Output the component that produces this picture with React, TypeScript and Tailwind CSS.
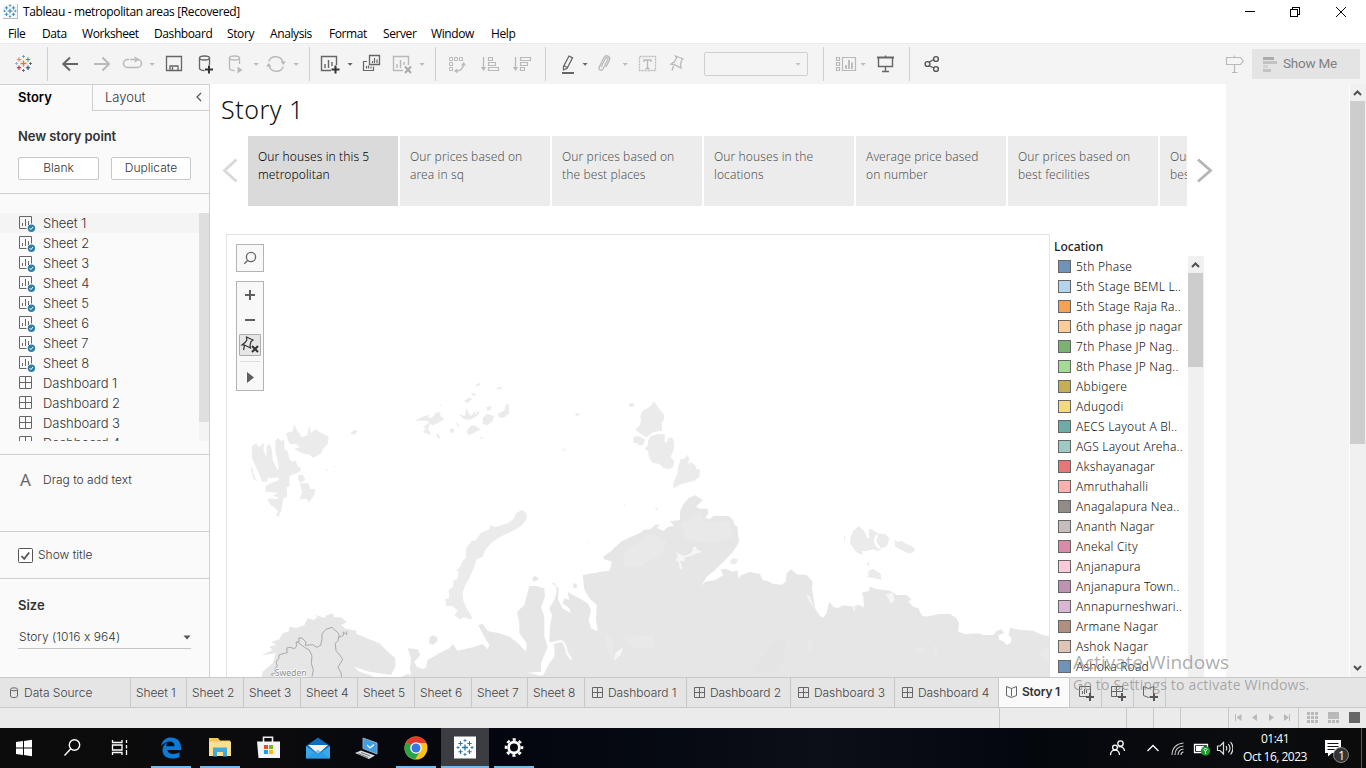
import React from "react";

const G = "#666";
const L = "#b9b9b9";

function Ico({ className = "", size = 24, children }: { className?: string; size?: number; children: React.ReactNode }) {
  return (
    <svg width={size} height={size} viewBox={`0 0 ${size} ${size}`} fill="none" className={`shrink-0 ${className}`}>
      {children}
    </svg>
  );
}

function Caret({ className, color = L }: { className: string; color?: string }) {
  return (
    <svg width="8" height="8" viewBox="0 0 8 8" className={`shrink-0 ${className}`}>
      <path d="M1.5 3h5.2L4.1 5.8z" fill={color} />
    </svg>
  );
}

const Sep = ({ className }: { className: string }) => <div className={`h-[34px] w-px shrink-0 bg-[#cfcfcf] ${className}`} />;

function Plus({ x, y, r, c, w = 1.2 }: { x: number; y: number; r: number; c: string; w?: number }) {
  return <path d={`M${x - r} ${y}h${2 * r}M${x} ${y - r}v${2 * r}`} stroke={c} strokeWidth={w} />;
}

function TableauMark({ mono }: { mono?: string }) {
  const c = (v: string) => mono ?? v;
  return (
    <>
      <Plus x={12.500} y={11.5} r={3} c={c("#e8762d")} w={1.3} />
      <Plus x={8} y={7.5} r={2.2} c={c("#eb912c")} w={1.1} />
      <Plus x={17} y={7.5} r={2.2} c={c("#59879b")} w={1.1} />
      <Plus x={8} y={15.8} r={2.2} c={c("#c72035")} w={1.1} />
      <Plus x={17} y={15.8} r={2.2} c={c("#1f447e")} w={1.1} />
      <Plus x={12.500} y={4.5} r={1.500} c={c("#7199a6")} w={0.9} />
      <Plus x={12.500} y={18.5} r={1.500} c={c("#5b6591")} w={0.9} />
      <Plus x={5.500} y={11.5} r={1.500} c={c("#7fb0c4")} w={0.9} />
      <Plus x={19.500} y={11.5} r={1.500} c={c("#5b6591")} w={0.9} />
    </>
  );
}

const menu = [
  ["File", "w-[34px]"],
  ["Data", "w-[40px]"],
  ["Worksheet", "w-[72px]"],
  ["Dashboard", "w-[73px]"],
  ["Story", "w-[43px]"],
  ["Analysis", "w-[59px]"],
  ["Format", "w-[54px]"],
  ["Server", "w-[48px]"],
  ["Window", "w-[60px]"],
  ["Help", "w-[40px]"],
];

function TitleBar() {
  return (
    <header className="flex h-[43px] shrink-0 flex-col bg-white font-['Open_Sans',sans-serif] text-[12px] text-black">
      <div className="flex h-[23px] items-center pl-[3px]">
        <div className="h-[15px] w-[15px] border-b border-r border-[#bbb] bg-[#f7f7f7]">
          <svg width="14" height="14" viewBox="3.500 2.5 18 18"><TableauMark mono="#2c7fb5" /></svg>
        </div>
        <span className="ml-[5px] tracking-[-0.36px]">Tableau - metropolitan areas [Recovered]</span>
        <svg width="126" height="20" viewBox="0 0 126 20" className="ml-auto" fill="none" stroke="#000" shapeRendering="crispEdges">
          <path d="M5 9.5h10" />
          <path d="M50.5 7.5h7v7h-7zM52.5 7V5.500h7v7H58" />
          <path d="M96 5l10 10M106 5l-10 10" shapeRendering="auto" />
        </svg>
      </div>
      <div className="flex h-5 items-center pl-2 pt-px">
        {menu.map(([m, w]) => (
          <span key={m} className={`${w} shrink-0 tracking-[-0.4px]`}>{m}</span>
        ))}
      </div>
    </header>
  );
}

function Toolbar() {
  return (
    <div className="flex h-[41px] shrink-0 items-center border-t border-[#ececec] bg-[#f4f4f4] pl-[11px]">
      <Ico><TableauMark /></Ico>
      <Sep className="ml-3" />
      <Ico className="ml-[10px]"><path d="M20 12H5M12 5.500L5.300 12l6.700 6.500" stroke={G} strokeWidth="2" /></Ico>
      <Ico className="ml-2"><path d="M4 12h15M12.500 5.500L19 12l-6.500 6.500" stroke={L} strokeWidth="2" /></Ico>
      <Ico className="ml-1.5"><path d="M9 7.500H7.500a4 4 0 0 0 0 8h10a4 4 0 0 0 0-8H16" stroke={L} strokeWidth="1.500" /><path d="M10 7.500h8M14.500 5l3.500 2.500L14.500 10" stroke={L} strokeWidth="1.300" /></Ico>
      <Caret className="ml-1" />
      <Ico className="ml-1.5"><path d="M4.500 4.500h15v14h-15z" stroke={G} strokeWidth="1.300" /><path d="M8 18.500v-4.500h8v4.500M10.500 15v3" stroke={G} strokeWidth="1.300" /></Ico>
      <Ico className="ml-2">
        <path d="M5.500 6v10c0 1.500 2 2.500 5 2.500M15.500 6v7" stroke={G} strokeWidth="1.300" />
        <ellipse cx="10.500" cy="6" rx="5" ry="2" stroke={G} strokeWidth="1.300" />
        <path d="M11 17.500h8M15 13.500v8" stroke="#333" strokeWidth="2" />
      </Ico>
      <Ico className="ml-1.5">
        <path d="M5.500 6v10c0 1.500 2 2.500 5 2.500M15.500 6v6" stroke={L} strokeWidth="1.300" />
        <ellipse cx="10.500" cy="6" rx="5" ry="2" stroke={L} strokeWidth="1.300" />
        <path d="M13.500 14.500l5 3.500-5 3.500z" fill={L} />
      </Ico>
      <Caret className="ml-1" />
      <Ico className="ml-1">
        <path d="M4.700 9.500a7.500 7.500 0 0 1 14.400 1.500M19.300 14.500A7.500 7.500 0 0 1 4.900 13" stroke={L} strokeWidth="1.400" />
        <path d="M16.500 9.500h5.500l-2.700 3.500zM2 14.500h5.500L4.800 11z" fill={L} />
      </Ico>
      <Caret className="ml-1" />
      <Sep className="ml-[9px]" />
      <Ico className="ml-[9px]">
        <path d="M12 18.500H2.500v-14h15V13" stroke={G} strokeWidth="1.400" />
        <path d="M6 12v4M9.500 8v8M13 10v4" stroke={G} strokeWidth="1.400" />
        <path d="M12.500 17.500h8M16.500 13.500v8" stroke="#333" strokeWidth="2" />
      </Ico>
      <Caret className="ml-[3px]" color={G} />
      <Ico className="ml-[5px]">
        <path d="M10.500 3.500h10v9h-10z" stroke={G} strokeWidth="1.300" />
        <path d="M13.500 9v2M15.500 6v5M18 7.500V11" stroke={G} strokeWidth="1.200" />
        <path d="M8 9.500H4.500v9h10v-4M7.500 14v2.500M9.500 13.500v3M12 14.500v2" stroke={G} strokeWidth="1.200" />
      </Ico>
      <Ico className="ml-2">
        <path d="M12 18.500H2.500v-14h15V13" stroke={L} strokeWidth="1.400" />
        <path d="M6 12v4M9.500 8v8M13 10v3" stroke={L} strokeWidth="1.400" />
        <path d="M14 14.500l6 6.500M20 14.500l-6 6.500" stroke="#aaa" strokeWidth="2" />
      </Ico>
      <Caret className="ml-[3px]" />
      <Sep className="ml-[9px]" />
      <Ico className="ml-[9px]">
        <path d="M4.500 5.500h3v3h-3zM9.500 5.500h3v3h-3zM14.500 5.500h3v3h-3zM4.500 10.500h3v3h-3zM4.500 15.500h3v3h-3z" stroke={L} />
        <path d="M18.500 11.500c0 5-3 7.500-8 7.500" stroke={L} strokeWidth="1.300" />
        <path d="M16 13.500l2.700-3.500 2.300 3.500zM12.500 16.500v5L9 19z" fill={L} />
      </Ico>
      <Ico className="ml-[9px]">
        <path d="M5.500 5v12" stroke={L} strokeWidth="1.300" /><path d="M2.800 15h5.400l-2.700 4z" fill={L} />
        <path d="M10.500 5.500h4v3h-4zM10.500 10.500h7v3h-7zM10.500 15.500h10v3h-10z" stroke={L} strokeWidth="1.200" />
      </Ico>
      <Ico className="ml-2">
        <path d="M5.500 5v12" stroke={L} strokeWidth="1.300" /><path d="M2.800 15h5.400l-2.700 4z" fill={L} />
        <path d="M10.500 5.500h10v3h-10zM10.500 10.500h7v3h-7zM10.500 15.500h4v3h-4z" stroke={L} strokeWidth="1.200" />
      </Ico>
      <Sep className="ml-[11px]" />
      <Ico className="ml-[10px]">
        <path d="M7.500 14.500L13 4l3.500 1.700L11 16.500l-3.500 1.300zM7.500 13.500l3.800 2M13 4l3.500 2" stroke={G} strokeWidth="1.300" />
        <path d="M6 21h12" stroke={G} strokeWidth="2" />
      </Ico>
      <Caret className="ml-px" color={G} />
      <Ico className="ml-1">
        <path d="M8 15l4.500-8.500c1-1.500 3-.5 2.300 1.200L10 17c-1.500 2.500-5 .5-3.800-2L11 5.500C13 2 18 4.500 16.300 8.500L13 15" stroke={L} strokeWidth="1.300" />
      </Ico>
      <Caret className="ml-1" />
      <Ico className="ml-1.5">
        <path d="M4.500 4.500h16v14h-16z" stroke={L} strokeWidth="1.300" strokeDasharray="2 1" />
        <path d="M9 10V8h7v2M12.500 8v8.500M10.500 16.500h4" stroke={L} strokeWidth="1.400" />
      </Ico>
      <Ico className="ml-1.5">
        <path d="M10.500 4l7.500 3-1.500 1.500-1 4 .5 3.500-7-3.500-3-.5 3.500-2.500 2-3.500zM8.500 14l-1.500 4.500" stroke={L} strokeWidth="1.300" />
      </Ico>
      <div className="ml-[15px] flex h-6 w-[104px] items-center justify-end rounded-[2px] border border-[#cfcfcf] pr-[5px]">
        <Caret className="" color="#c4c4c4" />
      </div>
      <Sep className="ml-[15px]" />
      <Ico className="ml-[10px]">
        <path d="M2.500 5.500h3v3h-3zM2.500 10.500h3v3h-3zM2.500 15.500h3v3h-3zM8.500 5.500h13v13h-13z" stroke={L} strokeWidth="1.200" />
        <path d="M12 13v4M15 8v9M18 10.500V17" stroke={L} strokeWidth="1.800" />
      </Ico>
      <Caret className="ml-px" />
      <Ico className="ml-1.5">
        <path d="M4 5.500h17" stroke={G} strokeWidth="2" />
        <path d="M5.500 6v8.500h14V6M12.500 3.500V5M12.500 15v5M9 19.500h7" stroke={G} strokeWidth="1.400" />
      </Ico>
      <Sep className="ml-3" />
      <Ico className="ml-[10px]">
        <path d="M7.500 11l6.500-3.500M7.500 13l6.500 3" stroke="#555" strokeWidth="1.300" />
        <circle cx="7.500" cy="12" r="2.400" fill="#f4f4f4" stroke="#555" strokeWidth="1.400" />
        <circle cx="16" cy="7" r="2.400" fill="#f4f4f4" stroke="#555" strokeWidth="1.400" />
        <circle cx="16" cy="17" r="2.400" fill="#f4f4f4" stroke="#555" strokeWidth="1.400" />
      </Ico>
      <Ico className="ml-auto">
        <path d="M3.500 5.500h14l2.700 3.500-2.700 3.500h-14zM11.500 3.500v2M11.500 12.500V20M9 20.500h5.500" stroke={L} strokeWidth="1.200" />
      </Ico>
      <div className="ml-[5px] mr-[6px] flex h-[30px] w-[108px] items-center bg-[#e4e4e4] pl-[11px]">
        <svg width="15" height="15" viewBox="0 0 15 15">
          <path d="M0 0h11v3H0z" fill="#ababab" /><path d="M0 4h14v3H0z" fill="#c2c2c2" /><path d="M0 8h5v3H0z" fill="#d3d3d3" /><path d="M0 12h8v3H0z" fill="#c2c2c2" />
        </svg>
        <span className="mb-px ml-[5px] text-[13.5px] tracking-[-0.25px] text-[#808080] font-['Roboto',sans-serif]">Show Me</span>
      </div>
    </div>
  );
}

function SheetGlyph({ dash }: { dash?: boolean }) {
  return dash ? (
    <svg width="18" height="18" viewBox="0 0 18 18" fill="none" stroke={G} className="shrink-0">
      <rect x="1.500" y="2.500" width="12" height="12" rx="0.500" /><path d="M7.500 2.500v12M1.500 8.500h12" />
    </svg>
  ) : (
    <svg width="18" height="18" viewBox="0 0 18 18" fill="none" stroke={G} className="shrink-0">
      <path d="M8.500 14.500h-7v-12h12v7" /><path d="M4.500 9v3M7.500 5v7M10.500 7v4" />
      <circle cx="13.400" cy="14.200" r="3.700" fill="#2f7ea3" stroke="none" />
      <path d="M11.600 14.200l1.300 1.400 2.200-2.700" stroke="#fff" />
    </svg>
  );
}

function Sidebar() {
  const rows = [...Array(8)].map((_, i) => `Sheet ${i + 1}`).concat([1, 2, 3, 4].map((i) => `Dashboard ${i}`));
  return (
    <aside className="flex w-[210px] shrink-0 flex-col border-r border-t border-[#d0d0d0] bg-[#fafafa] font-['Inter',sans-serif] text-[12px] font-light text-[#333] [font-feature-settings:'calt'_0]">
      <div className="flex h-[26px] shrink-0">
        <div className="w-[92px] pl-[18px] pt-[2px] text-[13px] font-semibold leading-5 text-black">Story</div>
        <div className="flex flex-1 justify-between border-b border-l border-[#d0d0d0] pl-3 pr-[6px] pt-[2px] text-[13px] leading-5">
          <span>Layout</span>
          <svg width="8" height="12" viewBox="0 0 8 12" className="mt-[4px]" fill="none" stroke="#555" strokeWidth="1.200"><path d="M6 2L2 6l4 4" /></svg>
        </div>
      </div>
      <div className="h-[83px] shrink-0 border-b border-[#cfcfcf] pl-[18px] pt-[15px]">
        <div className="text-[13px] font-semibold leading-5 tracking-[-0.08px]">New story point</div>
        <div className="mt-[11px] flex gap-3">
          <div className="flex h-[23px] w-[81px] items-center justify-center rounded-[2px] border border-[#c8c8c8] bg-white pb-0.5">Blank</div>
          <div className="flex h-[23px] w-20 items-center justify-center rounded-[2px] border border-[#c8c8c8] bg-white pb-0.5">Duplicate</div>
        </div>
      </div>
      <div className="mt-[19px] flex h-[228px] shrink-0 overflow-hidden">
        <div className="flex-1">
          {rows.map((r, i) => (
            <div key={r} className={`flex h-5 items-center pl-[18px] text-[13px] ${i === 0 ? "bg-[#f4f4f4]" : ""}`}>
              <SheetGlyph dash={i > 7} />
              <span className="ml-[7px] pt-[2px] tracking-[-0.05px]">{r}</span>
            </div>
          ))}
        </div>
        <div className="w-[10px] bg-[#f4f4f4]"><div className="h-[209px] bg-[#dfdfdf]" /></div>
      </div>
      <div className="mt-[13px] flex h-[77px] shrink-0 border-t border-[#cfcfcf] pl-5 pt-4 leading-[18px]">
        <span className="w-[23px] font-['Noto_Sans',sans-serif] text-[17px] font-normal text-[#666]">A</span>
        <span>Drag to add text</span>
      </div>
      <div className="flex h-[47px] shrink-0 items-center border-t border-[#cfcfcf] pl-[18px]">
        <svg width="15" height="15" viewBox="0 0 15 15" fill="none"><rect x=".5" y=".5" width="14" height="14" rx="1" fill="#fff" stroke="#555" /><path d="M3.500 8l2.700 2.800 5-6.300" stroke="#555" strokeWidth="1.800" /></svg>
        <span className="ml-[5px]">Show title</span>
      </div>
      <div className="flex-1 border-t border-[#cfcfcf] px-[18px] pt-[16px]">
        <div className="text-[13px] font-semibold leading-5">Size</div>
        <div className="mt-[11px] flex h-[23px] items-center justify-between border-b border-[#c4c4c4] pl-px">
          <span className="tracking-[0.05px]">Story (1016 x 964)</span>
          <svg width="8" height="5" viewBox="0 0 8 5"><path d="M.5.500h7L4 4.500z" fill="#555" /></svg>
        </div>
      </div>
    </aside>
  );
}

function MapArt() {
  return (
    <svg width="822" height="442" viewBox="227 235 822 442" className="block">
      <g transform="translate(226 370) scale(.33333)">
        <g fill="#ebebeb">
          <path d="M78 228L92 220 98 232 115 218 112 240 122 262 122 228 132 222 138 240 140 270 155 300 158 290 148 240 148 212 156 203 164 212 174 210 176 238 186 245 190 268 200 275 208 270 216 290 224 292 224 304 205 312 190 318 190 348 182 352 184 380 172 385 168 410 165 425 160 432 160 442 150 435 156 425 150 416 134 405 124 388 135 385 150 388 160 382 140 378 155 368 118 365 118 348 135 340 160 330 155 322 135 325 128 320 122 335 108 335 102 318 90 292 78 265z" />
          <path d="M180 190L200 184 204 162 212 180 222 192 226 202 244 196 250 166 254 190 268 178 280 185 288 190 308 200 305 222 290 238 286 250 262 263 250 254 228 250 214 242 206 236 222 232 210 222 192 222 186 210z" />
          <path d="M216 316l14-2 8 16-14 8-8-8zM222 340l26 0 4 16 16 2-4 18-16 22-6-12-22 2 8-20-2-10zM372 192l12-12 12 4-12 10zM74 292l6 4 4 22 10 16-12-8z" />
          <path d="M566 152L590 140 608 134 606 142 618 144 630 128 642 126 644 140 656 146 640 156 622 166 612 162 606 178 614 188 612 194 590 186 600 176 592 170 610 158 604 152zM630 190l8 4 6 12-8-2zM670 178l12-4 4 12-10 4zM690 156l10 10-6 4zM698 132L716 138 722 114 728 130 736 138 750 120 746 134 758 122 760 132 744 144 728 150 712 146zM714 92l18-10 6 6-14 12zM736 68l12 4 2 6-12-2zM748 46l14-8 2 6-12 6zM722 182L736 166 750 168 764 178 752 184 742 190 726 196zM770 144L784 132 804 138 800 152 786 166 770 162zM782 112l14-4-2 12-10 4zM814 132L834 122 840 104 848 102 850 130 832 144 820 142zM762 200l10 2-6 6zM810 54l18-4-4 8-10 0zM1046 134l8-6 8 6-8 4zM1210 100l14 0-2 10-12 0zM1008 234l12 6-4 4z" />
          <path d="M658 688L670 684 668 660 682 650 682 632 694 628 698 605 690 602 704 588 712 570 720 565 720 535 738 512 748 512 765 488 790 478 794 465 808 472 845 460 862 448 870 430 888 419 902 430 902 448 888 466 862 482 820 502 795 520 778 540 770 560 752 568 742 598 730 625 718 645 710 668 712 692 722 715 738 740 735 750 715 742 700 748 685 735 695 722 678 708 660 708z" />
          <path d="M300 298l4 0 0 6-4 0zM324 288l6 1-4 3zM642 102l4 2-2 6zM1194 402l4 2-2 6zM1086 516l5 2-2 5z" />
        </g>
        <g fill="#e6e6e6">
          <path d="M505 930L545 912 555 915 552 895 555 865 545 835 575 838 583 855 565 875 572 890 590 897 600 893 605 870 640 850 670 835 680 822 695 842 740 832 770 822 785 838 790 825 775 800 757 765 770 762 785 783 820 790 850 800 875 818 900 845 902 820 880 790 880 760 873 725 895 705 910 648 930 648 955 655 957 680 945 712 955 740 955 800 965 830 945 880 945 905 905 908 945 918 960 912 945 930zM920 622l8-4 12 10-14 6-6-2z" />
          <path d="M945 930L970 880 985 860 985 825 970 815 972 770 978 735 970 715 985 690 992 664 990 648 998 655 996 690 1010 715 1035 730 1030 715 1010 700 1015 685 1030 690 1025 665 1035 672 1060 685 1085 700 1095 720 1088 750 1095 775 1115 784 1110 750 1112 705 1090 685 1075 658 1070 615 1150 602 1158 575 1130 562 1160 540 1185 515 1260 480V930z" />
          <path d="M106 930L110 905 140 880 146 862 150 850 106 856 140 840 130 830 150 824 136 816 160 808 170 790 188 784 190 770 210 774 235 766 245 744 262 750 275 742 268 734 295 744 302 736 320 730 325 742 345 742 362 756 345 766 360 776 390 782 392 792 430 808 460 820 480 840 508 865 508 890 495 915 460 910 430 905 385 890 400 905 440 918 450 930z" />
          <path d="M610 804l10-8 14 6 0 12-12 10-12-2zM978 640l8-2 4 12zM1042 640l10 2 0 12-10 0z" />
        </g>
        <g fill="none" stroke="#fbfbfb">
          <path d="M975 820l30-7c12 4 16 22 18 36l14 20" strokeWidth="7" />
          <path d="M1162 866l10-20 18-12-10 24-12 8" strokeWidth="3" strokeOpacity=".7" />
        </g>
        <g fill="none" stroke="#a8a8a8" strokeWidth="3">
          <path d="M140 918L136 912 148 910 146 898 154 888 150 876 158 866 160 854 176 850 184 848 182 834 192 832 206 836 212 828 210 818 220 814 218 804 228 804 240 816 238 826 260 824 272 832 284 826 288 808 288 792 300 778 318 772 326 780 338 790 340 802 352 796 352 786 362 794 362 784" />
          <path d="M212 814L236 832 250 840 258 858 256 880 262 900 258 920M338 800L336 812 328 820 330 842 342 856 350 868 336 892 346 910 346 922" />
        </g>
        <text x="146" y="919" fontSize="26" fill="#8c8c8c" stroke="#fff" strokeWidth="4" paintOrder="stroke" fontFamily="Noto Sans, sans-serif">Sweden</text>
      </g>
      <g transform="translate(600 380) scale(.33333)">
        <g fill="#ebebeb">
          <path d="M88 70l14 0-2 10-12 0zM162 64L176 84 192 104 192 118 186 126 186 152 160 156 140 172 132 168 106 150 118 138 124 118 120 110 128 92 150 80zM100 170l16-2 20 12-8 16-12 0-4-6-12-2zM144 182L152 168 176 162 194 162 194 186 200 188 204 174 216 172 222 186 222 206 212 230 222 244 220 260 206 268 190 264 178 252 158 248 148 234 144 214 134 206 144 196zM220 326L220 308 232 282 234 264 242 238 254 236 262 224 268 236 264 254 272 246 286 256 290 268 300 268 298 290 284 302 258 308 240 314z" />
          <path d="M752 470L760 452 776 438 792 452 798 464 800 474 808 474 806 448 816 448 832 460 856 462 868 476 862 496 850 504 836 502 844 508 832 514 820 508 804 512 786 514 786 524 768 516 756 498 750 492zM884 478l8 8 14-4 12 10 14 4 14 12-8 10-14 2-20-10-18-10zM732 466l4 8-4 12zM800 548l8 0-2 14zM794 590L806 588 804 574 820 566 842 582 844 600 822 594z" />
          <path d="M316 304l4 2M164 386l10-4-4 8zM390 542l10-8 14 4-6 14-14 0z" />
        </g>
        <path d="M832 466c-10 10-8 26 6 38" stroke="#fff" strokeWidth="8" fill="none" />
        <path
          fill="#e6e6e6"
          d="M-5 576L30 573 36 560 38 545 8 536 26 532 18 524 34 516 40 506 60 490 85 475 125 460 130 450 150 448 160 440 166 434 180 434 170 444 190 452 205 440 222 438 210 424 240 420 240 394 248 376 265 355 285 346 308 360 288 380 300 386 322 386 325 400 316 414 330 418 340 408 385 408 400 420 402 432 412 440 415 470 418 480 412 496 395 520 370 545 345 570 320 590 302 620 315 605 345 600 370 586 362 570 374 566 400 575 412 570 416 597 422 586 450 576 480 582 488 600 505 604 520 612 545 614 557 605 560 580 574 568 590 583 620 585 638 605 636 625 640 650 645 685 660 708 670 713 680 698 688 665 700 680 712 685 730 676 760 680 775 674 792 682 790 650 785 638 808 632 808 620 830 627 870 632 890 645 920 645 935 660 924 664 940 680 955 685 965 705 975 710 1020 702 1050 702 1070 715 1077 730 1075 755 1095 762 1135 760 1150 765 1180 765 1190 752 1205 748 1212 760 1195 765 1198 780 1210 784 1220 795 1233 788 1234 775 1226 765 1230 743 1260 750 1300 752 1325 764 1352 771V900H-5z"
        />
        <g fill="#f6f6f6">
          <path d="M226 512L236 522 252 528 268 522 276 516 280 502 288 500 292 510 306 516 290 520 272 528 254 532 254 544 240 542 248 566 240 568 236 546 226 540 234 530zM618 640l14 14 10 30-14-20zM856 644l22-6 6 22-14 12-2-14zM42 842l4-22 24-20-8 24zM756 682l12 0-4 12z" />
        </g>
        <g fill="#f0f0f0" opacity=".28">
          <path d="M240 430L300 400 320 430 390 420 400 470 340 490 260 480zM70 520L150 460 200 480 190 520 120 560 70 560zM15 760l25 20 0 60-20-30zM70 770l90-4 6 36-60 4zM625 780l10 0 0 34-10 0zM948 806l20-8 4 14-20 12zM1000 796l12 2 2 26-10 0zM1310 820l40-24 0 54z" />
        </g>
        <path d="M490 830l40-46 26 0-4 50-30 40-80 10z" fill="#e1e1e1" opacity=".5" />
      </g>
    </svg>
  );
}

const points = [
  ["Our houses in this 5", "metropolitan"],
  ["Our prices based on", "area in sq"],
  ["Our prices based on", "the best places"],
  ["Our houses in the", "locations"],
  ["Average price based", "on number"],
  ["Our prices based on", "best fecilities"],
  ["Our prices based on", "best area"],
];

const legend: [string, string][] = [
  ["5th Phase", "bg-[#6f93b9]"],
  ["5th Stage BEML L..", "bg-[#b3d5ef]"],
  ["5th Stage Raja Ra..", "bg-[#f5a353]"],
  ["6th phase jp nagar", "bg-[#ffcb96]"],
  ["7th Phase JP Nag..", "bg-[#78b372]"],
  ["8th Phase JP Nag..", "bg-[#a3db94]"],
  ["Abbigere", "bg-[#c5ae55]"],
  ["Adugodi", "bg-[#f4d97f]"],
  ["AECS Layout A Bl..", "bg-[#6caca8]"],
  ["AGS Layout Areha..", "bg-[#9ecac5]"],
  ["Akshayanagar", "bg-[#e77677]"],
  ["Amruthahalli", "bg-[#ffafac]"],
  ["Anagalapura Nea..", "bg-[#938b88]"],
  ["Ananth Nagar", "bg-[#c7bebb]"],
  ["Anekal City", "bg-[#dc8aaa]"],
  ["Anjanapura", "bg-[#fccada]"],
  ["Anjanapura Town..", "bg-[#bf92b3]"],
  ["Annapurneshwari..", "bg-[#dbb6d4]"],
  ["Armane Nagar", "bg-[#b0907c]"],
  ["Ashok Nagar", "bg-[#e0c4b5]"],
  ["Ashoka Road", "bg-[#6f93b9]"],
];

function Story() {
  return (
    <section className="flex w-[1016px] shrink-0 flex-col overflow-hidden bg-white font-['Noto_Sans',sans-serif]">
      <h1 className="h-[52px] shrink-0 pl-[11px] pt-[7px] text-[25px] font-light leading-[36px] tracking-[0.5px] text-[#111]">Story 1</h1>
      <div className="flex h-[70px] shrink-0">
        <svg width="38" height="70" viewBox="0 0 38 70" fill="none" className="shrink-0"><path d="M26.500 23.500L14.500 34.500l12 11" stroke="#d9d9d9" strokeWidth="2.800" /></svg>
        <div className="flex w-[939px] shrink-0 gap-0.5 overflow-hidden">
          {points.map(([a, b], i) => (
            <div key={i} className={`w-[150px] shrink-0 whitespace-nowrap pl-[10px] pt-3 text-[12px] font-light leading-[18px] tracking-[0.1px] ${i === 0 ? "bg-[#dadada] text-black" : "bg-[#ececec] text-[#555]"}`}>
              {a}<br />{b}
            </div>
          ))}
        </div>
        <svg width="39" height="70" viewBox="0 0 39 70" fill="none" className="shrink-0"><path d="M11 23.500l12.500 11L11 45.500" stroke="#b5b5b5" strokeWidth="2.800" /></svg>
      </div>
      <div className="mt-7 flex flex-1 overflow-hidden pl-4">
        <div className="relative w-[824px] shrink-0 border-x border-t border-[#e3e3e3]">
          <MapArt />
          <div className="absolute left-[9px] top-[9px] flex flex-col gap-[9px]">
            <div className="flex h-7 w-7 items-center justify-center border border-[#b4b4b4] bg-[#f8f8f8]">
              <svg width="14" height="14" viewBox="0 0 14 14" fill="none" stroke="#666" strokeWidth="1.300"><circle cx="8" cy="6" r="4.600" /><path d="M4.800 9.300L1.300 12.800" /></svg>
            </div>
            <div className="flex h-[110px] w-7 flex-col items-center border border-[#b4b4b4] bg-[#f8f8f8]">
              <svg width="10" height="10" viewBox="0 0 10 10" className="mt-2" stroke="#5f5f5f" strokeWidth="2"><path d="M0 5h10M5 0v10" /></svg>
              <svg width="10" height="2" viewBox="0 0 10 2" className="mt-[19px] shrink-0"><path d="M0 0h10v2H0z" fill="#5f5f5f" /></svg>
              <div className="mt-[13px] h-[22px] w-[22px] shrink-0 rounded-[1px] border border-[#adadad] bg-[#e6e6e6]">
                <svg width="20" height="20" viewBox="0 0 20 20" fill="none" stroke="#333"><path d="M6.500 2l6.500 3-2 1.500-1 4 .5 2.500-6-3-2.500 0L5 7.500l1.800-2.500zM4.500 10.500l-1 4.500" strokeWidth="1.200" /><path d="M12 11l6 6M18 11l-6 6" strokeWidth="2" /></svg>
              </div>
              <div className="mt-[5px] h-px w-5 shrink-0 bg-[#dcdcdc]" />
              <svg width="7" height="11" viewBox="0 0 7 11" className="mt-[10px] shrink-0"><path d="M0 0l7 5.500L0 11z" fill="#5f5f5f" /></svg>
            </div>
          </div>
        </div>
        <div className="flex w-[138px] shrink-0 flex-col pl-1">
          <div className="h-[23px] shrink-0 pt-1 text-[12px] font-medium leading-[18px] text-[#222]">Location</div>
          {legend.map(([t, c]) => (
            <div key={t} className="flex h-5 shrink-0 items-center pl-1">
              <div className={`mb-px h-[13px] w-[13px] border border-[#666] ${c}`} />
              <span className="ml-[5px] whitespace-nowrap text-[12px] font-light tracking-[0.22px] text-[#111]">{t}</span>
            </div>
          ))}
        </div>
        <div className="mt-[22px] flex w-4 shrink-0 flex-col bg-[#f0f0f0]">
          <svg width="16" height="17" viewBox="0 0 16 17" className="shrink-0" fill="none" stroke="#505050" strokeWidth="2"><path d="M4 11l3.500-3.500L11 11" /></svg>
          <div className="h-[94px] w-[15px] bg-[#cdcdcd]" />
        </div>
      </div>
    </section>
  );
}

function DashGlyph() {
  return <svg width="12" height="12" viewBox="0 0 12 12" fill="none" stroke="#666" className="shrink-0"><path d="M.5.500h10v10H.5zM5.500.500v10M.5 5.500h10" /></svg>;
}
const StoryPath = "M.5.500l5 2 5-2v9l-5 2-5-2z";

const sheetTabs = ["w-[56px]", "w-[57px]", "w-[57px]", "w-[57px]", "w-[57px]", "w-[57px]", "w-[56px]", "w-[57px]"];
const dashTabs = ["w-[102px]", "w-[104px]", "w-[104px]", "w-[104px]"];

function Tabs() {
  const tab = "flex shrink-0 items-center border-r border-[#c8c8c8]";
  return (
    <nav className="flex h-[31px] shrink-0 border-y border-[#c8c8c8] bg-[#e5e5e5] font-['Inter',sans-serif] text-[12px] font-light text-[#444]">
      <div className={`${tab} w-[131px] pl-[9px]`}>
        <svg width="10" height="12" viewBox="0 0 10 12" fill="none" stroke="#666"><path d="M1.500 2.500v7c0 1.300 7 1.300 7 0v-7" /><ellipse cx="5" cy="2.300" rx="3.500" ry="1.500" /></svg>
        <span className="ml-[5px]">Data Source</span>
      </div>
      {sheetTabs.map((w, i) => <div key={i} className={`${tab} ${w} pl-[5px] whitespace-nowrap tracking-[-0.1px]`}>Sheet {i + 1}</div>)}
      {dashTabs.map((w, i) => (
        <div key={i} className={`${tab} ${w} gap-1 whitespace-nowrap pl-[7px] tracking-[-0.05px]`}><DashGlyph /><span>Dashboard {i + 1}</span></div>
      ))}
      <div className={`${tab} w-[71px] gap-1 whitespace-nowrap bg-[#fafafa] pb-0.5 pl-[7px] font-semibold tracking-[-0.2px] text-[#333]`}>
        <svg width="12" height="12" viewBox="0 0 12 12" fill="none" stroke="#666" className="shrink-0"><path d={StoryPath + "M5.500 2.500v8"} /></svg>
        Story 1
      </div>
      {["M8 10.500H.5V.500h11V7M3.500 5v3M5.500 3v5M7.500 4v3", "M7 10.500H.5V.500h11V6M5.500.500v10M.5 5.500h11", StoryPath].map((d, i) => (
        <div key={i} className={`${tab} w-8 pl-[9px]`}>
          <svg width="17" height="16" viewBox="0 0 17 16" fill="none" stroke="#666" className="mt-[3px]"><path d={d} /><path d="M7 11h8M11 7v8" stroke="#e5e5e5" strokeWidth="4" /><path d="M7 11h8M11 7v8" stroke="#555" strokeWidth="2" /></svg>
        </div>
      ))}
    </nav>
  );
}

function StatusBar() {
  const cell = "h-5 shrink-0 border-l border-[#c8c8c8]";
  return (
    <div className="flex h-5 shrink-0 justify-end bg-[#ebebeb]">
      <div className={`${cell} w-[127px]`} /><div className={`${cell} w-[27px]`} /><div className={`${cell} w-[27px]`} /><div className={`${cell} w-[48px]`} />
      <div className={`${cell} w-[70px]`}>
        <svg width="69" height="20" viewBox="0 0 69 20" fill="#b9b9b9">
          <path d="M6 6h1v7H6zM12.500 6v7l-5-3.500zM28 6v7l-5-3.500zM40 6v7l5-3.500zM55 6v7l5-3.500zM60 6h1v7h-1z" />
        </svg>
      </div>
      <div className={`${cell} w-[68px]`}>
        <svg width="67" height="20" viewBox="0 0 67 20" fill="#b9b9b9">
          <path d="M8 4h3v3H8zM12 4h3v3h-3zM16 4h3v3h-3zM8 8h3v3H8zM12 8h3v3h-3zM16 8h3v3h-3zM8 12h3v3H8zM12 12h3v3h-3zM16 12h3v3h-3zM29 4h11v7H29zM29 12h3v3h-3zM33 12h3v3h-3zM37 12h3v3h-3z" />
          <path d="M50 4h11v11H50z" fill="#666" />
        </svg>
      </div>
    </div>
  );
}

function Task({ w, ml = "", line, active, children }: { w: string; ml?: string; line?: boolean; active?: boolean; children: React.ReactNode }) {
  return (
    <div className={`flex h-10 shrink-0 flex-col items-center ${w} ${ml} ${active ? "bg-[#3b3d42]" : ""}`}>
      <svg width="28" height="38" viewBox="0 0 28 38" fill="none" className="shrink-0">{children}</svg>
      {line && <div className="h-0.5 w-full bg-[#76b9ed]" />}
    </div>
  );
}

function Taskbar() {
  return (
    <footer className="flex h-10 shrink-0 items-center bg-[linear-gradient(90deg,#0c0c0d_0%,#0b0b0d_20%,#03060f_35%,#060a12_50%,#0d0f16_60%,#04070d_75%,#0a0c0f_90%,#0b0b0b_100%)] text-white">
      <Task w="w-12"><path d="M6 14l7-1v6.500H6zM14 12.900l8-1.200v7.800h-8zM6 20.500h7V27l-7-1zM14 20.500h8v7.800l-8-1.200z" fill="#fff" /></Task>
      <Task w="w-12"><circle cx="16.500" cy="17" r="5.200" stroke="#fff" strokeWidth="1.400" /><path d="M12.800 20.800L6.500 27.500" stroke="#fff" strokeWidth="1.400" /></Task>
      <Task w="w-12"><path d="M6.500 12v2.500h9.500V12M6.500 27v-2.500h9.500V27M6.500 17h9.500v5H6.500zM20.500 12v3M20.500 17v3.500M20.500 22v5" stroke="#fff" strokeWidth="1.300" /></Task>
      <Task w="w-10" ml="ml-[7px]" line>
        <path d="M4 19C5 12 9 9.500 14 9.500c6 0 10 4 10 10v2.500H10.500c.5 4.500 7.500 5 12 2.300v4.500C20 30.300 17.500 30.500 15 30.500c-6.500 0-9.500-4-9.500-8.500 0-3.500 2-6 5-7.500-1 1.500-1.200 3-1.200 3.800h8.200c.3-6-8-6.500-13.500 0z" fill="#0c7bd8" />
      </Task>
      <Task w="w-10" ml="ml-[9px]" line>
        <path d="M3 10h9l2 2.500h10V28H3z" fill="#f7c64b" /><path d="M3 13.500h22V28H3z" fill="#fde08b" /><path d="M7 28.500v-9h14v9h-4v-4.500h-6v4.500z" fill="#3fa9e0" />
      </Task>
      <Task w="w-10" ml="ml-2">
        <path d="M9.500 14V9.200h9V14" stroke="#eee" strokeWidth="1.600" /><path d="M3 13.500h23V30H4.500z" fill="#f5f5f5" />
        <path d="M10 17h4v4h-4z" fill="#e74f24" /><path d="M15 17h4v4h-4z" fill="#7eb900" /><path d="M10 22h4v4h-4z" fill="#1ba1e2" /><path d="M15 22h4v4h-4z" fill="#fdb813" />
      </Task>
      <Task w="w-10" ml="ml-[10px]">
        <path d="M2 18L14 9.500 26 18v12H2z" fill="#0f6dbb" /><path d="M4 17h20l-10 9z" fill="#f3f3f3" /><path d="M2 18l12 8.500L26 18v12.500H2z" fill="#39a9ec" /><path d="M2 30.500l12-9 12 9z" fill="#2292df" opacity=".5" />
      </Task>
      <Task w="w-10" ml="ml-[9px]"><path d="M10 10l14 5v11L10 20.500z" fill="#3d9fe6" stroke="#9ab" /><path d="M14 17l3 3 4-3.500" stroke="#fff" strokeWidth="1.200" /><path d="M2 25l6-2.500 14 5-6 3.500z" fill="#d5dadd" /><path d="M5 25.500l10 4M8 24.500l9 3.500" stroke="#777" /></Task>
      <Task w="w-10" ml="ml-[9px]" line>
        <circle cx="14" cy="20" r="11.500" fill="#fbc116" /><path d="M14 20L4 14.200A11.500 11.500 0 0 1 24 14.200H14z" fill="#e33b2e" /><path d="M14 20L4 14.200A11.500 11.500 0 0 0 13 31.500l5.500-9z" fill="#2ba24c" />
        <path d="M14 14.500h10" stroke="#e33b2e" /><circle cx="14" cy="20" r="5.800" fill="#fff" /><circle cx="14" cy="20" r="4.500" fill="#3478e8" />
      </Task>
      <Task w="w-12" ml="ml-[5px]" line active>
        <path d="M3 8.500h22v22H3z" fill="#fff" /><g transform="translate(1.500 8)"><TableauMark mono="#2f73a3" /></g>
      </Task>
      <Task w="w-10" ml="ml-[5px]" line>
        <circle cx="14" cy="19.500" r="5.400" stroke="#fff" strokeWidth="2.800" />
        <circle cx="14" cy="19.500" r="8" stroke="#fff" strokeWidth="2.600" strokeDasharray="3.140 3.140" strokeDashoffset="1.570" />
      </Task>
      <svg width="126" height="40" viewBox="0 0 126 40" fill="none" stroke="#fff" strokeWidth="1.300" className="ml-auto shrink-0">
        <circle cx="13.500" cy="15.500" r="2.700" /><circle cx="8" cy="19.500" r="2.400" /><path d="M3.500 27c0-3 2-5 4.500-5s4.500 2 4.500 5M11.500 19c3-1 6 1 6 4" />
        <path d="M40.500 23l5.500-5.500 5.500 5.500" />
        <path d="M65 27c0-7 4.500-11.500 11.500-12M68 27c0-5.500 3-8.500 8.500-9M71 27c0-3.500 2-5.500 5.500-6M74 27c0-1.500 1-2.800 2.500-3" stroke="#ccc" strokeWidth="1.100" />
        <path d="M87.500 16.500h13v8h-13z" /><path d="M89 18h8v5h-8z" fill="#fff" stroke="none" /><circle cx="98.500" cy="23" r="4.700" fill="#1d9b30" stroke="none" /><path d="M98.500 26v-3M97 21.500l1.500-1.500 1.500 1.500-1.500 2z" stroke="#fff" strokeWidth="1" />
        <path d="M110.500 18h2.500l3.500-3.500v11.500L113 22.500h-2.500zM119 18c1 1.500 1 3 0 4.500M121.300 16c2 2.500 2 6 0 8.500M123.600 14c3 4 3 8.500 0 12.500" stroke="#ddd" strokeWidth="1.200" />
      </svg>
      <div className="ml-1 flex w-[76px] shrink-0 flex-col items-center font-['Open_Sans',sans-serif] text-[12px] leading-[18px] tracking-[-0.5px]">
        <span>01:41</span><span className="whitespace-nowrap">Oct 16, 2023</span>
      </div>
      <svg width="53" height="40" viewBox="0 0 53 40" fill="none" className="shrink-0">
        <path d="M12 12h16v13H19l-4 3.500V25h-3z" fill="#fff" /><path d="M14.500 15.500h11M14.500 18.500h11M14.500 21.500h7" stroke="#111" />
        <circle cx="28" cy="27" r="7.500" fill="#333" stroke="#888" /><text x="25" y="31.500" fontSize="12.500" fill="#fff" fontFamily="Open Sans, sans-serif">1</text>
        <path d="M48.500 0v40" stroke="#555" />
      </svg>
    </footer>
  );
}

export default function App() {
  return (
    <div className="relative flex h-[768px] w-[1366px] flex-col overflow-hidden bg-white">
      <TitleBar />
      <Toolbar />
      <main className="flex h-[593px] shrink-0 overflow-hidden">
        <Sidebar />
        <Story />
        <div className="flex-1 bg-[#f4f4f4]" />
        <div className="flex w-[17px] shrink-0 flex-col border-l border-white bg-[#f0f0f0]">
          <svg width="16" height="17" viewBox="0 0 16 17" className="shrink-0" fill="none" stroke="#505050" strokeWidth="2"><path d="M4 11l3.500-3.500L11 11" /></svg>
          <div className="h-[343px] w-[15px] bg-[#cdcdcd]" />
          <svg width="16" height="17" viewBox="0 0 16 17" className="mt-auto shrink-0" fill="none" stroke="#505050" strokeWidth="2"><path d="M4 6l3.500 3.500L11 6" /></svg>
        </div>
      </main>
      <Tabs />
      <StatusBar />
      <Taskbar />
      <div className="pointer-events-none absolute left-[1073px] top-[650px] whitespace-nowrap font-['Open_Sans',sans-serif] text-[#8a8a8a]/70">
        <div className="text-[19px] leading-[25px]">Activate Windows</div>
        <div className="text-[14px] leading-5 tracking-[0.2px]">Go to Settings to activate Windows.</div>
      </div>
    </div>
  );
}
